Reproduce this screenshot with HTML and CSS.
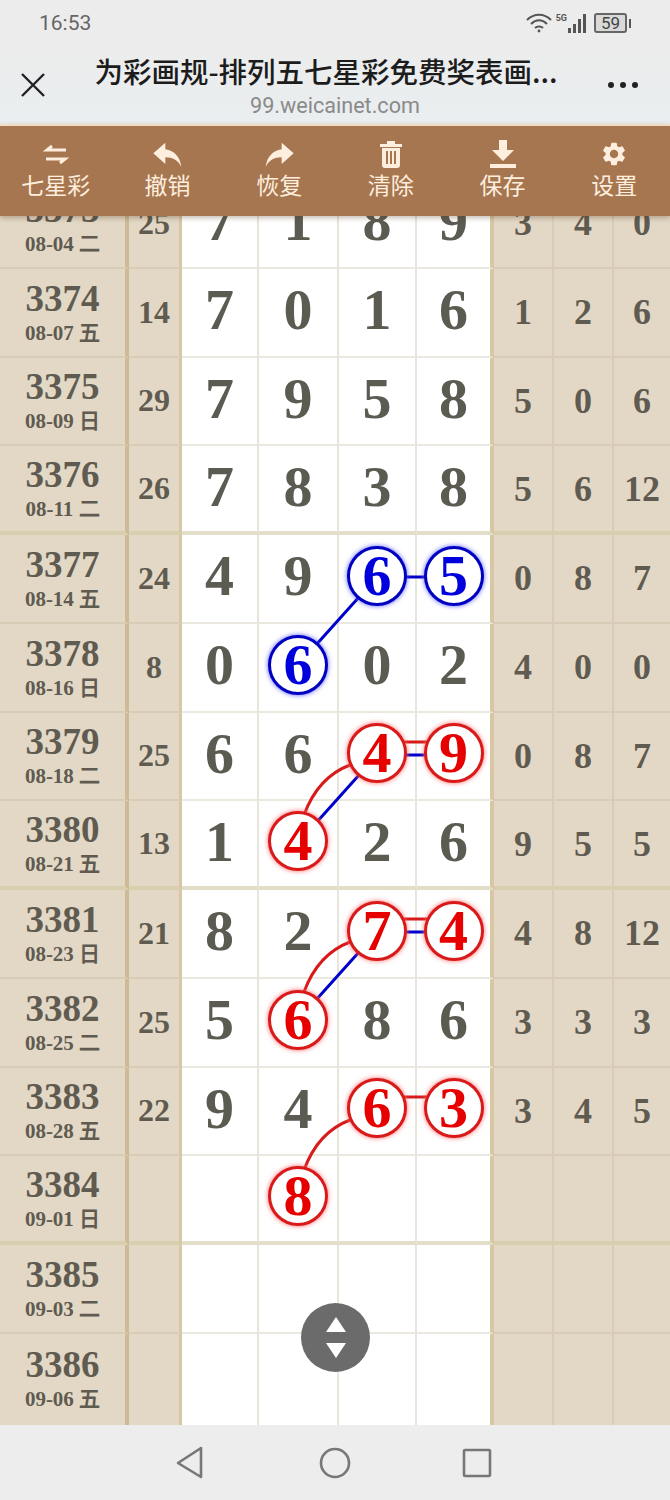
FILE: index.html
```html
<!DOCTYPE html>
<html lang="zh-CN">
<head>
    <meta charset="UTF-8">
    <meta name="viewport" content="width=device-width, initial-scale=1.0">
    <title>为彩画规</title>
    <link rel="stylesheet" href="styles.css">
</head>
<body>

<div class="status-bar">
    <span class="clock">16:53</span>
    <div class="status-icons">
        <svg class="wifi" width="26" height="20" viewBox="0 0 26 20" fill="none" stroke="#555" stroke-width="2">
            <path d="M1 7C8 0 18 0 25 7"/>
            <path d="M5 11C10 6 16 6 21 11"/>
            <path d="M9 15C11 13 15 13 17 15"/>
            <circle cx="13" cy="18" r="1.4" fill="#555" stroke="none"/>
        </svg>
        <span class="net">5G</span>
        <div class="signal">
            <i class="s1"></i><i class="s2"></i><i class="s3"></i><i class="s4"></i>
        </div>
        <div class="battery"><span>59</span></div>
        <div class="battery-tip"></div>
    </div>
</div>

<header class="title-bar">
    <svg class="close" width="26" height="26" viewBox="0 0 26 26" stroke="#222" stroke-width="2.4">
        <path d="M2 2L24 24M24 2L2 24"/>
    </svg>
    <div class="title-text">
        <div class="title">为彩画规-排列五七星彩免费奖表画...</div>
        <div class="host">99.weicainet.com</div>
    </div>
    <div class="more"><i></i><i></i><i></i></div>
</header>

<nav class="toolbar">
    <div class="tool">
        <svg width="28" height="28" viewBox="0 0 28 28" fill="none" stroke="#fdeede" stroke-width="3">
            <path d="M24 10H5L10 6"/>
            <path d="M4 19H23L18 23"/>
        </svg>
        <span>七星彩</span>
    </div>
    <div class="tool">
        <svg width="32" height="28" viewBox="0 0 24 21" fill="#fdeede"><path d="M10 7V2L1 10l9 8v-5c6 0 9 2 12 7-1-7-5-12-12-13z"/></svg>
        <span>撤销</span>
    </div>
    <div class="tool">
        <svg class="flip" width="32" height="28" viewBox="0 0 24 21" fill="#fdeede"><path d="M10 7V2L1 10l9 8v-5c6 0 9 2 12 7-1-7-5-12-12-13z"/></svg>
        <span>恢复</span>
    </div>
    <div class="tool">
        <svg width="28" height="28" viewBox="0 0 28 28" fill="#fdeede">
            <path d="M3 4h7V1h8v3h7v3H3z"/>
            <path d="M5 8h18v17a3 3 0 0 1-3 3H8a3 3 0 0 1-3-3zM9 11v13h2V11zM13 11v13h2V11zM17 11v13h2V11z" fill-rule="evenodd"/>
        </svg>
        <span>清除</span>
    </div>
    <div class="tool">
        <svg width="28" height="28" viewBox="0 0 28 28" fill="#fdeede">
            <path d="M10 0h8v10h7L14 21 3 10h7z"/>
            <rect x="1" y="24" width="26" height="4"/>
        </svg>
        <span>保存</span>
    </div>
    <div class="tool">
        <svg width="30" height="30" viewBox="0 0 24 24" fill="#fdeede"><path d="M19.14 12.94c.04-.3.06-.61.06-.94 0-.32-.02-.64-.07-.94l2.03-1.58c.18-.14.23-.41.12-.61l-1.92-3.32c-.12-.22-.37-.29-.59-.22l-2.39.96c-.5-.38-1.03-.7-1.62-.94l-.36-2.54c-.04-.24-.24-.41-.48-.41h-3.84c-.24 0-.43.17-.47.41l-.36 2.54c-.59.24-1.13.57-1.62.94l-2.39-.96c-.22-.08-.47 0-.59.22L2.74 8.87c-.12.21-.08.47.12.61l2.03 1.58c-.05.3-.09.63-.09.94s.02.64.07.94l-2.03 1.58c-.18.14-.23.41-.12.61l1.92 3.32c.12.22.37.29.59.22l2.39-.96c.5.38 1.03.7 1.62.94l.36 2.54c.05.24.24.41.48.41h3.84c.24 0 .44-.17.47-.41l.36-2.54c.59-.24 1.13-.56 1.62-.94l2.39.96c.22.08.47 0 .59-.22l1.92-3.32c.12-.22.07-.47-.12-.61l-2.01-1.58zM12 15.6c-1.98 0-3.6-1.62-3.6-3.6s1.62-3.6 3.6-3.6 3.6 1.62 3.6 3.6-1.62 3.6-3.6 3.6z"/></svg>
        <span>设置</span>
    </div>
</nav>

<main class="viewport">
    <div class="sheet">
        <div class="row">
            <div class="cell issue"><b>3373</b><small>08-04 二</small></div><div class="cell sum">25</div>
            <div class="cell num">7</div><div class="cell num">1</div><div class="cell num">8</div><div class="cell num last">9</div>
            <div class="cell side">3</div><div class="cell side">4</div><div class="cell side end">0</div>
        </div>
        <div class="row">
            <div class="cell issue"><b>3374</b><small>08-07 五</small></div><div class="cell sum">14</div>
            <div class="cell num">7</div><div class="cell num">0</div><div class="cell num">1</div><div class="cell num last">6</div>
            <div class="cell side">1</div><div class="cell side">2</div><div class="cell side end">6</div>
        </div>
        <div class="row">
            <div class="cell issue"><b>3375</b><small>08-09 日</small></div><div class="cell sum">29</div>
            <div class="cell num">7</div><div class="cell num">9</div><div class="cell num">5</div><div class="cell num last">8</div>
            <div class="cell side">5</div><div class="cell side">0</div><div class="cell side end">6</div>
        </div>
        <div class="row break">
            <div class="cell issue"><b>3376</b><small>08-11 二</small></div><div class="cell sum">26</div>
            <div class="cell num">7</div><div class="cell num">8</div><div class="cell num">3</div><div class="cell num last">8</div>
            <div class="cell side">5</div><div class="cell side">6</div><div class="cell side end">12</div>
        </div>
        <div class="row">
            <div class="cell issue"><b>3377</b><small>08-14 五</small></div><div class="cell sum">24</div>
            <div class="cell num">4</div><div class="cell num">9</div><div class="cell num"><span class="ball blue">6</span></div><div class="cell num last"><span class="ball blue">5</span></div>
            <div class="cell side">0</div><div class="cell side">8</div><div class="cell side end">7</div>
        </div>
        <div class="row">
            <div class="cell issue"><b>3378</b><small>08-16 日</small></div><div class="cell sum">8</div>
            <div class="cell num">0</div><div class="cell num"><span class="ball blue">6</span></div><div class="cell num">0</div><div class="cell num last">2</div>
            <div class="cell side">4</div><div class="cell side">0</div><div class="cell side end">0</div>
        </div>
        <div class="row">
            <div class="cell issue"><b>3379</b><small>08-18 二</small></div><div class="cell sum">25</div>
            <div class="cell num">6</div><div class="cell num">6</div><div class="cell num"><span class="ball red">4</span></div><div class="cell num last"><span class="ball red">9</span></div>
            <div class="cell side">0</div><div class="cell side">8</div><div class="cell side end">7</div>
        </div>
        <div class="row break">
            <div class="cell issue"><b>3380</b><small>08-21 五</small></div><div class="cell sum">13</div>
            <div class="cell num">1</div><div class="cell num"><span class="ball red">4</span></div><div class="cell num">2</div><div class="cell num last">6</div>
            <div class="cell side">9</div><div class="cell side">5</div><div class="cell side end">5</div>
        </div>
        <div class="row">
            <div class="cell issue"><b>3381</b><small>08-23 日</small></div><div class="cell sum">21</div>
            <div class="cell num">8</div><div class="cell num">2</div><div class="cell num"><span class="ball red">7</span></div><div class="cell num last"><span class="ball red">4</span></div>
            <div class="cell side">4</div><div class="cell side">8</div><div class="cell side end">12</div>
        </div>
        <div class="row">
            <div class="cell issue"><b>3382</b><small>08-25 二</small></div><div class="cell sum">25</div>
            <div class="cell num">5</div><div class="cell num"><span class="ball red">6</span></div><div class="cell num">8</div><div class="cell num last">6</div>
            <div class="cell side">3</div><div class="cell side">3</div><div class="cell side end">3</div>
        </div>
        <div class="row">
            <div class="cell issue"><b>3383</b><small>08-28 五</small></div><div class="cell sum">22</div>
            <div class="cell num">9</div><div class="cell num">4</div><div class="cell num"><span class="ball red">6</span></div><div class="cell num last"><span class="ball red">3</span></div>
            <div class="cell side">3</div><div class="cell side">4</div><div class="cell side end">5</div>
        </div>
        <div class="row break">
            <div class="cell issue"><b>3384</b><small>09-01 日</small></div><div class="cell sum"></div>
            <div class="cell num"></div><div class="cell num"><span class="ball red">8</span></div><div class="cell num"></div><div class="cell num last"></div>
            <div class="cell side"></div><div class="cell side"></div><div class="cell side end"></div>
        </div>
        <div class="row">
            <div class="cell issue"><b>3385</b><small>09-03 二</small></div><div class="cell sum"></div>
            <div class="cell num"></div><div class="cell num"></div><div class="cell num"></div><div class="cell num last"></div>
            <div class="cell side"></div><div class="cell side"></div><div class="cell side end"></div>
        </div>
        <div class="row tail">
            <div class="cell issue"><b>3386</b><small>09-06 五</small></div><div class="cell sum"></div>
            <div class="cell num"></div><div class="cell num"></div><div class="cell num"></div><div class="cell num last"></div>
            <div class="cell side"></div><div class="cell side"></div><div class="cell side end"></div>
        </div>
    </div>

    <!-- lines between the balls, in page coordinates -->
    <svg class="links" width="670" height="1209" viewBox="0 216 670 1209" fill="none" stroke-width="3">
        <g stroke="#0000cc">
            <path d="M377 577L298 665M377 577H454"/>
            <path d="M377 755L298 843M377 755H454"/>
            <path d="M377 932L298 1020M377 932H454"/>
        </g>
        <g stroke="#d81a1a">
            <path d="M400 742H430M350 765Q318 777 304 815"/>
            <path d="M400 919H430M350 942Q318 954 304 992"/>
            <path d="M400 1097H430M350 1120Q318 1132 304 1170"/>
        </g>
    </svg>

    <div class="scroll-btn"><i class="up"></i><i class="down"></i></div>
</main>

<footer class="nav-bar">
    <svg width="30" height="34" viewBox="0 0 30 34" fill="none" stroke="#777" stroke-width="2.6" stroke-linejoin="round"><path d="M26 2V31L3 17z"/></svg>
    <svg width="32" height="32" viewBox="0 0 32 32" fill="none" stroke="#777" stroke-width="2.6"><circle cx="16" cy="16" r="14"/></svg>
    <svg class="square" width="30" height="30" viewBox="0 0 30 30" fill="none" stroke="#777" stroke-width="2.6" stroke-linejoin="round"><rect x="2" y="2" width="26" height="26" rx="1"/></svg>
</footer>

</body>
</html>
```

FILE: styles.css
```css
body {
    margin: 0;
    width: 670px;
    height: 1500px;
    overflow: hidden;
    font-family: "Noto Sans CJK SC", sans-serif;
    background-color: #ececec;
}
.status-bar {
    height: 46px;
    display: flex;
    justify-content: space-between;
    align-items: center;
    padding: 0 39px 0 39px;
    background-color: #ececec;
}
.clock {
    font-family: Roboto, sans-serif;
    font-size: 21px;
    color: #666;
}
.status-icons {
    display: flex;
    align-items: center;
}
.net {
    font-family: Roboto, sans-serif;
    font-size: 9px;
    font-weight: 700;
    color: #555;
    margin: 0 0 10px 4px;
}
.signal {
    display: flex;
    align-items: flex-end;
    gap: 2px;
    height: 20px;
    margin: 0 8px 0 1px;
}
.signal i {
    display: block;
    width: 3px;
    background-color: #555;
}
.signal .s1 { height: 5px; }
.signal .s2 { height: 9px; }
.signal .s3 { height: 14px; }
.signal .s4 { height: 19px; }
.battery {
    width: 33px;
    height: 20px;
    box-sizing: border-box;
    border: 2px solid #666;
    border-radius: 3px;
    display: flex;
    align-items: center;
    justify-content: center;
    background-color: #d9d9d9;
}
.battery span {
    font-family: Roboto, sans-serif;
    font-size: 17px;
    color: #444;
    line-height: 16px;
}
.battery-tip {
    width: 2px;
    height: 9px;
    margin-left: 2px;
    background-color: #555;
}
.title-bar {
    height: 78px;
    display: flex;
    align-items: flex-start;
    background: linear-gradient(#ececec, #e9eef0);
}
.close {
    margin: 26px 0 0 20px;
}
.title-text {
    width: 470px;
    margin-left: 46px;
    text-align: center;
}
.title {
    font-size: 28.5px;
    font-weight: 500;
    line-height: 50px;
    white-space: nowrap;
    color: #1c1c1c;
    margin-left: -2px;
}
.host {
    font-family: Roboto, sans-serif;
    font-size: 21.6px;
    line-height: 20px;
    color: #8a8a8a;
    padding-left: 16px;
}
.more {
    display: flex;
    gap: 6px;
    margin: 36px 0 0 46px;
}
.more i {
    display: block;
    width: 6px;
    height: 6px;
    border-radius: 50%;
    background-color: #222;
}
.toolbar {
    position: relative;
    z-index: 5;
    height: 92px;
    display: flex;
    background-color: #a67650;
    border-top: 2px solid #f2dcc4;
    box-sizing: border-box;
    box-shadow: 0 2px 5px rgba(90, 60, 30, 0.35);
}
.tool {
    flex: 1;
    display: flex;
    flex-direction: column;
    align-items: center;
    padding-top: 14px;
    color: #fdeede;
    font-size: 23px;
    line-height: 30px;
}
.tool svg {
    height: 28px;
}
.tool span {
    margin-top: 1px;
}
.flip {
    transform: scaleX(-1);
}
.viewport {
    position: relative;
    height: 1209px;
    overflow: hidden;
    background-color: #fff;
}
.sheet {
    margin-top: -36px;
}
.row {
    display: grid;
    grid-template-columns: 129px 53px 77px 80px 78px 77px 60px 60px 56px;
    height: 88.75px;
}
.row.tail {
    height: 93px;
}
.cell {
    box-sizing: border-box;
    display: flex;
    align-items: center;
    justify-content: center;
    font-family: "Liberation Serif", serif;
    font-weight: 700;
    color: #5f5b50;
    border-bottom: 2px solid #d9ccb6;
    background-color: #e3d8c6;
}
.row.break .cell {
    border-bottom: 4px solid #d8cfae;
}
.row.tail .cell {
    border-bottom: none;
    padding-bottom: 4px;
}
.issue {
    flex-direction: column;
    border-right: 4px solid #cdbb98;
    padding-top: 2px;
}
.issue b {
    font-size: 37px;
    line-height: 36px;
    margin-bottom: 3px;
}
.issue small {
    font-size: 21px;
    line-height: 26px;
}
.sum {
    font-size: 32px;
    border-right: 3px solid #d8c6a5;
}
.cell.num {
    font-size: 58px;
    color: #5b5b52;
    background-color: #fff;
    border-right: 2px solid #e8e5dc;
    border-bottom-color: #ebe8df;
    padding-bottom: 5px;
}
.row.break .num {
    border-bottom-color: #e2dec8;
}
.cell.num.last {
    border-right: 4px solid #d8c6a5;
}
.side {
    font-size: 36px;
    border-right: 2px solid #d9ccb6;
}
.side.end {
    border-right: none;
}
.ball {
    position: relative;
    z-index: 2;
    box-sizing: border-box;
    width: 60px;
    height: 60px;
    border-radius: 50%;
    border: 3px solid;
    background-color: #fff;
    display: flex;
    align-items: center;
    justify-content: center;
    line-height: 54px;
}
.ball.blue {
    color: #0000dd;
    border-color: #0000c0;
    box-shadow: 0 0 5px #5a5aff;
}
.ball.red {
    color: #e60000;
    border-color: #d81a1a;
    box-shadow: 0 0 5px #ff6a6a;
}
.links {
    position: absolute;
    top: 0;
    left: 0;
    z-index: 1;
}
.scroll-btn {
    position: absolute;
    z-index: 3;
    left: 301px;
    top: 1087px;
    width: 69px;
    height: 69px;
    border-radius: 50%;
    background-color: #6b6b6b;
    display: flex;
    flex-direction: column;
    align-items: center;
    justify-content: center;
    gap: 11px;
}
.scroll-btn i {
    display: block;
    width: 0;
    height: 0;
    border-left: 10px solid transparent;
    border-right: 10px solid transparent;
}
.scroll-btn .up {
    border-bottom: 15px solid #fff;
}
.scroll-btn .down {
    border-top: 15px solid #fff;
}
.nav-bar {
    height: 75px;
    display: flex;
    align-items: center;
    justify-content: center;
    gap: 114px;
    background-color: #ededed;
}
.square {
    margin: 0 3px 0 -3px;
}
```
